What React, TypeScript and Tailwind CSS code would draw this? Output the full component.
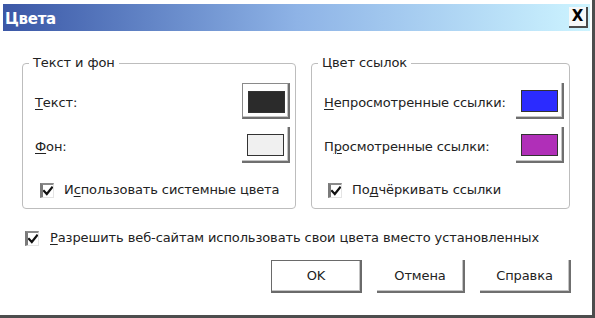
import React from "react";

const font = { fontFamily: '"DejaVu Sans", "Liberation Sans", sans-serif' };

function Check() {
  return (
    <span className="flex h-[15px] w-[14px] shrink-0 items-center justify-center border-l-[3px] border-t-[2px] border-r border-b border-l-[#7a7a7a] border-t-[#8a8a8a] border-r-[#e4e4e4] border-b-[#e4e4e4] bg-white">
      <svg width="10" height="10" viewBox="0 0 10 10">
        <path d="M1 5 L3.8 8 L9 1.5" fill="none" stroke="#111" strokeWidth="2.2" strokeLinecap="square" />
      </svg>
    </span>
  );
}

function ColorButton({ color, focused }: { color: string; focused?: boolean }) {
  return (
    <div
      className={
        "flex h-[36px] w-[48px] shrink-0 items-start pl-[5px] pt-[7px] border-r-2 border-b-2 border-r-[#6f6f6f] border-b-[#6f6f6f] shadow-[inset_-1px_-1px_0_#c4c4c4] " +
        (focused ? "border-l border-t border-l-[#8a8a8a] border-t-[#8a8a8a]" : "")
      }
    >
      <div className="h-[22px] w-[37px] border border-[#333]" style={{ backgroundColor: color }} />
    </div>
  );
}

function U({ children }: { children: React.ReactNode }) {
  return <span className="underline underline-offset-2 decoration-1">{children}</span>;
}

export default function App() {
  return (
    <div className="h-[318px] w-[595px] overflow-hidden bg-white text-[13px] leading-[16px] tracking-[-0.1px] text-[#222]" style={font}>
      <div className="flex h-[318px] w-[595px] flex-col border-r-[3px] border-b-[3px] border-[#4d4d4d] pl-[3px] pr-[0px] pt-[4px]">
        {/* Title bar */}
        <div className="flex h-[27px] w-[587px] items-center justify-between bg-gradient-to-r from-[#3b57a6] via-[#8eb3e6] to-[#cdf4ff] pl-[2px] pr-[2px]">
          <span className="mt-[2px] text-[15px] font-bold tracking-[-0.3px] text-white">Цвета</span>
          <div className="flex h-[21px] w-[19px] items-center justify-center border-r-2 border-b-2 border-[#4a4a4a] bg-[#f6f8f8] text-[15px] font-bold leading-none text-black">
            X
          </div>
        </div>

        {/* Groups */}
        <div className="mt-[24px] flex gap-[15px] pl-[19px]">
          <fieldset className="h-[154px] w-[274px] rounded-[4px] border border-[#bdbdbd]">
            <legend className="ml-[6px] px-[4px] leading-[16px]">Текст и фон</legend>
            <div className="flex flex-col pl-[12px] pr-[5px] pt-[12px]">
              <div className="flex items-center justify-between">
                <span className="pt-[3px]">
                  <U>Т</U>екст:
                </span>
                <ColorButton color="#2b2b2b" focused />
              </div>
              <div className="mt-[8px] flex items-center justify-between">
                <span className="pt-[4px]">
                  <U>Ф</U>он:
                </span>
                <ColorButton color="#f0f0f0" />
              </div>
              <div className="mt-[19px] flex items-center gap-[10px] pl-[5px]">
                <Check />
                <span>
                  И<U>с</U>пользовать системные цвета
                </span>
              </div>
            </div>
          </fieldset>

          <fieldset className="h-[154px] w-[259px] rounded-[4px] border border-[#bdbdbd]">
            <legend className="ml-[6px] px-[4px] leading-[16px]">Цвет ссылок</legend>
            <div className="flex flex-col pl-[12px] pr-[5px] pt-[12px]">
              <div className="flex items-center justify-between">
                <span className="pt-[3px]">
                  <U>Н</U>епросмотренные ссылки:
                </span>
                <ColorButton color="#2b2bff" />
              </div>
              <div className="mt-[8px] flex items-center justify-between">
                <span className="pt-[4px]">
                  П<U>р</U>осмотренные ссылки:
                </span>
                <ColorButton color="#b02fb8" />
              </div>
              <div className="mt-[19px] flex items-center gap-[10px] pl-[4px]">
                <Check />
                <span>
                  По<U>д</U>чёркивать ссылки
                </span>
              </div>
            </div>
          </fieldset>
        </div>

        {/* Allow websites */}
        <div className="mt-[21px] flex items-center gap-[11px] pl-[22px]">
          <Check />
          <span>
            <U>Р</U>азрешить веб-сайтам использовать свои цвета вместо установленных
          </span>
        </div>

        {/* Buttons */}
        <div className="mt-[14px] flex justify-end gap-[15px] pr-[21px]">
          <div className="flex h-[33px] w-[91px] items-center justify-center border border-[#6a6a6a] border-r-2 border-b-2 shadow-[inset_-1px_-1px_0_#c4c4c4]">
            OK
          </div>
          <div className="flex h-[33px] w-[88px] items-center justify-center border-r-2 border-b-2 border-[#6f6f6f] shadow-[inset_-1px_-1px_0_#c4c4c4]">
            Отмена
          </div>
          <div className="flex h-[33px] w-[91px] items-center justify-center border-r-2 border-b-2 border-[#6f6f6f] shadow-[inset_-1px_-1px_0_#c4c4c4]">
            Справка
          </div>
        </div>
      </div>
    </div>
  );
}
